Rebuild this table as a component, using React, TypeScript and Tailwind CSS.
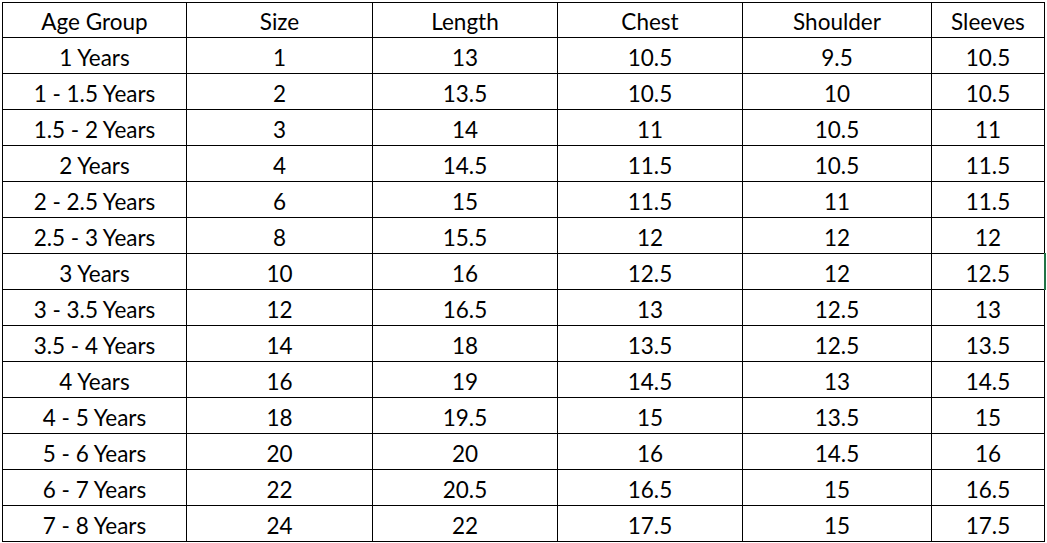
const rows = [
  ['1 Years', '1', '13', '10.5', '9.5', '10.5'],
  ['1 - 1.5 Years', '2', '13.5', '10.5', '10', '10.5'],
  ['1.5 - 2 Years', '3', '14', '11', '10.5', '11'],
  ['2 Years', '4', '14.5', '11.5', '10.5', '11.5'],
  ['2 - 2.5 Years', '6', '15', '11.5', '11', '11.5'],
  ['2.5 - 3 Years', '8', '15.5', '12', '12', '12'],
  ['3 Years', '10', '16', '12.5', '12', '12.5'],
  ['3 - 3.5 Years', '12', '16.5', '13', '12.5', '13'],
  ['3.5 - 4 Years', '14', '18', '13.5', '12.5', '13.5'],
  ['4 Years', '16', '19', '14.5', '13', '14.5'],
  ['4 - 5 Years', '18', '19.5', '15', '13.5', '15'],
  ['5 - 6 Years', '20', '20', '16', '14.5', '16'],
  ['6 - 7 Years', '22', '20.5', '16.5', '15', '16.5'],
  ['7 - 8 Years', '24', '22', '17.5', '15', '17.5'],
];

const headers = ['Age Group', 'Size', 'Length', 'Chest', 'Shoulder', 'Sleeves'];
const widths = ['w-[184px]', 'w-[186px]', 'w-[185px]', 'w-[185px]', 'w-[189px]', 'w-[113px]'];

export default function App() {
  return (
    <div className="w-[1047px] h-[543px] bg-white pt-[2px] pl-[2px] overflow-hidden">
      <table
        className="border-collapse text-black text-[22.5px] text-center table-fixed"
        style={{ fontFamily: 'Lato, "Open Sans", sans-serif' }}
      >
        <thead>
          <tr className="h-[35px]">
            {headers.map((h, i) => (
              <th key={h} className={`${widths[i]} border border-black font-normal p-0 pt-[4px] leading-none`}>
                {h}
              </th>
            ))}
          </tr>
        </thead>
        <tbody>
          {rows.map((r, ri) => (
            <tr key={r[0]} className="h-[36px]">
              {r.map((c, ci) => (
                <td
                  key={ci}
                  className={`border border-black p-0 pt-[5px] leading-none ${ri === 6 && ci === 5 ? 'border-r-2 border-r-[#217346]' : ''}`}
                >
                  {c}
                </td>
              ))}
            </tr>
          ))}
        </tbody>
      </table>
    </div>
  );
}
